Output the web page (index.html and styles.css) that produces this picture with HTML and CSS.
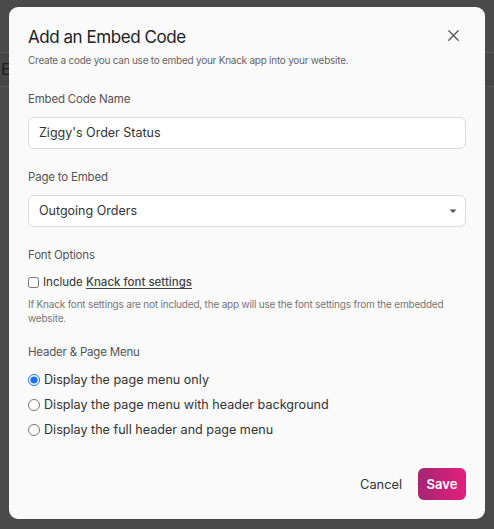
FILE: index.html
```html
<!DOCTYPE html>
<html>
<head>
<title>Add an Embed Code</title>
<link rel="stylesheet" href="styles.css">
</head>
<body>

  <div class="backdrop">
    <div class="backdrop-row">E</div>
  </div>

  <div class="modal">
    <button class="modal-close" aria-label="Close">
      <svg width="11" height="11" viewBox="0 0 11 11"><path d="M0.8 0.8 L10.2 10.2 M10.2 0.8 L0.8 10.2" stroke="#555" stroke-width="1.3" stroke-linecap="round"/></svg>
    </button>

    <h1 class="modal-title">Add an Embed Code</h1>
    <p class="modal-sub">Create a code you can use to embed your Knack app into your website.</p>

    <label class="field-label">Embed Code Name</label>
    <div class="input">Ziggy's Order Status</div>

    <label class="field-label">Page to Embed</label>
    <div class="input select">
      <span>Outgoing Orders</span>
      <svg width="8" height="5" viewBox="0 0 8 5"><path d="M0.5 0.5 H7.5 L4 4 Z" fill="#555"/></svg>
    </div>

    <label class="field-label">Font Options</label>
    <label class="check-row">
      <input type="checkbox">
      <span>Include <b class="link">Knack font settings</b></span>
    </label>
    <p class="help">If Knack font settings are not included, the app will use the font settings from the embedded website.</p>

    <label class="field-label">Header &amp; Page Menu</label>
    <div class="radios">
      <label class="check-row"><input type="radio" name="menu" checked><span>Display the page menu only</span></label>
      <label class="check-row"><input type="radio" name="menu"><span>Display the page menu with header background</span></label>
      <label class="check-row"><input type="radio" name="menu"><span>Display the full header and page menu</span></label>
    </div>

    <div class="modal-footer">
      <button class="btn-cancel">Cancel</button>
      <button class="btn-save">Save</button>
    </div>
  </div>

</body>
</html>
```

FILE: styles.css
```css
/* Page behind the overlay */
html,
body {
  height: 100%;
  margin: 0;
  background: #4a4a4a;
  font-family: 'Inter', 'Liberation Sans', sans-serif;
}

.backdrop {
  padding-top: 52px;
}

.backdrop-row {
  height: 33px;
  border-top: 1px solid #575757;
  border-bottom: 1px solid #575757;
  background: #474747;
  color: #1c1c1c;
  font-size: 16px;
  line-height: 33px;
  padding-left: 1px;
}

/* Modal */
.modal {
  position: fixed;
  left: 9px;
  top: 7px;
  width: 476px;
  height: 512px;
  box-sizing: border-box;
  background: #fafafa;
  border-radius: 9px;
  padding: 18px 19px 0 19px;
  display: flex;
  flex-direction: column;
}

.modal-close {
  position: absolute;
  right: 26px;
  top: 23px;
  border: 0;
  padding: 0;
  background: transparent;
  width: 11px;
  height: 11px;
  display: flex;
}

.modal-title {
  margin: 0;
  font-size: 17px;
  line-height: 24px;
  font-weight: 400;
  letter-spacing: -0.45px;
  color: #222;
}

.modal-sub {
  margin: 4px 0 0;
  font-size: 10px;
  line-height: 14px;
  letter-spacing: -0.25px;
  color: #666;
}

.field-label {
  display: block;
  margin-top: 23px;
  font-size: 11.5px;
  line-height: 16px;
  letter-spacing: -0.2px;
  color: #555;
}

.modal-sub + .field-label {
  margin-top: 24px;
}

.input {
  margin-top: 10px;
  height: 32px;
  box-sizing: border-box;
  border: 1px solid #dcdcdc;
  border-radius: 6px;
  background: #fff;
  padding: 0 10px;
  font-size: 12.5px;
  line-height: 30px;
  color: #333;
}

.select {
  display: flex;
  align-items: center;
  justify-content: space-between;
}

.select svg {
  margin-right: -2px;
}

.input + .field-label {
  margin-top: 20px;
}

.check-row {
  display: flex;
  align-items: center;
  gap: 4px;
  margin-top: 10px;
  font-size: 11.5px;
  line-height: 18px;
  color: #333;
}

.check-row input {
  margin: 0;
  width: 11px;
  height: 11px;
  accent-color: #1a73e8;
}

.link {
  font-weight: 500;
  color: #444;
  text-decoration: underline;
  text-underline-offset: 2px;
}

.help {
  margin: 6px 0 0;
  font-size: 10px;
  line-height: 14px;
  letter-spacing: -0.2px;
  color: #777;
}

.help + .field-label {
  margin-top: 19px;
}

.radios {
  margin-top: 2px;
  display: flex;
  flex-direction: column;
  gap: 7px;
}

.radios .check-row {
  margin-top: 0;
  font-size: 12.6px;
}

.radios .check-row input {
  width: 12px;
  height: 12px;
}

.radios .check-row:first-child {
  margin-top: 9px;
}

.modal-footer {
  margin-top: auto;
  margin-bottom: 19px;
  display: flex;
  justify-content: flex-end;
  align-items: center;
  gap: 16px;
}

.btn-cancel,
.btn-save {
  font-family: inherit;
  font-size: 12.8px;
  border: 0;
  height: 32px;
  padding: 0;
  border-radius: 6px;
}

.btn-cancel {
  background: transparent;
  color: #333;
}

.btn-save {
  width: 48px;
  color: #fff;
  font-size: 13px;
  font-weight: 600;
  background: linear-gradient(90deg, #a42675, #e31f7a);
}
```
